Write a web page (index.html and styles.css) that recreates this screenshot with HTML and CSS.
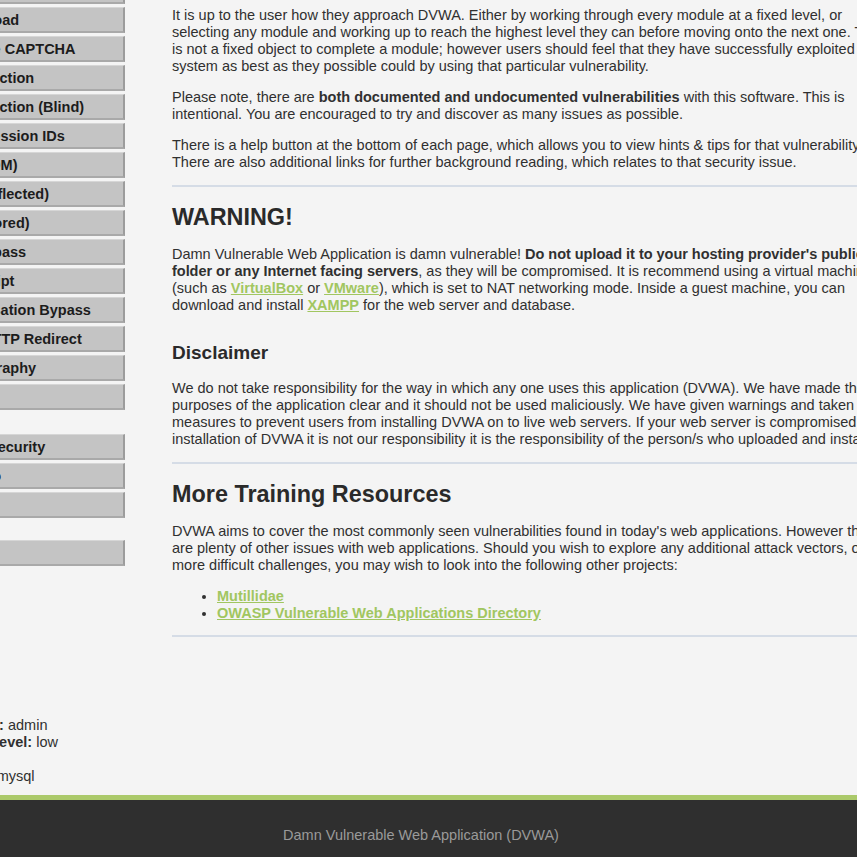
FILE: index.html
```html
<!DOCTYPE html>
<html lang="en">
<head>
<meta charset="utf-8">
<title>Damn Vulnerable Web Application (DVWA)</title>
<link rel="stylesheet" href="styles.css">
</head>
<body>
<div class="page">
  <div class="columns">
    <nav class="menu">
      <ul class="menu-group menu-group-first">
        <li><a href="#">File Inclusion</a></li>
        <li><a href="#">File Upload</a></li>
        <li><a href="#">Insecure CAPTCHA</a></li>
        <li><a href="#">SQL Injection</a></li>
        <li><a href="#">SQL Injection (Blind)</a></li>
        <li><a href="#">Weak Session IDs</a></li>
        <li><a href="#">XSS (DOM)</a></li>
        <li><a href="#">XSS (Reflected)</a></li>
        <li><a href="#">XSS (Stored)</a></li>
        <li><a href="#">CSP Bypass</a></li>
        <li><a href="#">JavaScript</a></li>
        <li><a href="#">Authorisation Bypass</a></li>
        <li><a href="#">Open HTTP Redirect</a></li>
        <li><a href="#">Cryptography</a></li>
        <li><a href="#">API</a></li>
      </ul>
      <ul class="menu-group menu-group-second">
        <li><a href="#">DVWA Security</a></li>
        <li><a href="#">PHP Info</a></li>
        <li><a href="#">About</a></li>
      </ul>
      <ul class="menu-group menu-group-third">
        <li><a href="#">Logout</a></li>
      </ul>
    </nav>
    <main class="main">
      <p>It is up to the user how they approach DVWA. Either by working through every module at a fixed level, or selecting any module and working up to reach the highest level they can before moving onto the next one. There is not a fixed object to complete a module; however users should feel that they have successfully exploited the system as best as they possible could by using that particular vulnerability.</p>
      <p>Please note, there are <b>both documented and undocumented vulnerabilities</b> with this software. This is intentional. You are encouraged to try and discover as many issues as possible.</p>
      <p>There is a help button at the bottom of each page, which allows you to view hints &amp; tips for that vulnerability. There are also additional links for further background reading, which relates to that security issue.</p>
      <hr class="rule">
      <h2 class="title">WARNING!</h2>
      <p>Damn Vulnerable Web Application is damn vulnerable! <b class="warn-strong">Do not upload it to your hosting provider's public_html folder or any Internet facing servers</b>, as they will be compromised. It is recommend using a virtual machine (such as <a class="link" href="#">VirtualBox</a> or <a class="link" href="#">VMware</a>), which is set to NAT networking mode. Inside a guest machine, you can download and install <a class="link" href="#">XAMPP</a> for the web server and database.</p>
      <h3 class="subtitle">Disclaimer</h3>
      <p>We do not take responsibility for the way in which any one uses this application (DVWA). We have made the purposes of the application clear and it should not be used maliciously. We have given warnings and taken measures to prevent users from installing DVWA on to live web servers. If your web server is compromised via an installation of DVWA it is not our responsibility it is the responsibility of the person/s who uploaded and installed it.</p>
      <hr class="rule">
      <h2 class="title">More Training Resources</h2>
      <p>DVWA aims to cover the most commonly seen vulnerabilities found in today's web applications. However there are plenty of other issues with web applications. Should you wish to explore any additional attack vectors, or want more difficult challenges, you may wish to look into the following other projects:</p>
      <ul class="projects">
        <li><a class="link" href="#">Mutillidae</a></li>
        <li><a class="link" href="#">OWASP Vulnerable Web Applications Directory</a></li>
      </ul>
      <hr class="rule">
    </main>
  </div>
  <div class="system-info">
    <div><b>Username:</b> admin</div>
    <div><b>Security Level:</b> low</div>
    <div><b>Locale:</b> en</div>
    <div><b>SQLi DB:</b> mysql</div>
  </div>
  <footer class="footer">
    <p>Damn Vulnerable Web Application (DVWA)</p>
  </footer>
</div>
</body>
</html>
```

FILE: styles.css
```css
html, body {
  margin: 0;
  padding: 0;
  overflow: hidden;
  background: #f4f4f4;
}

body {
  font-family: "Liberation Sans", Arial, sans-serif;
  font-size: 14.5px;
  line-height: 17px;
  color: #303030;
}

.page {
  width: 1002px;
  margin-left: -80px;
}

.columns {
  display: flex;
  align-items: flex-start;
}

.menu {
  width: 205px;
  flex: none;
}

.menu-group {
  list-style: none;
  margin: 0;
  padding: 0;
}

.menu-group-first {
  margin-top: -22px;
}

.menu-group-second {
  margin-top: 24px;
}

.menu-group-third {
  margin-top: 22px;
}

.menu-group li {
  margin-bottom: 3px;
}

.menu-group a {
  display: block;
  box-sizing: border-box;
  height: 26px;
  padding: 4px 0 0 21px;
  background: #c4c4c4;
  border-top: 1px solid #d6d6d6;
  border-right: 2px solid #9c9c9c;
  border-bottom: 2px solid #a9a9a9;
  color: #1c1c1c;
  font-weight: bold;
  text-decoration: none;
  white-space: nowrap;
  overflow: hidden;
}

.main {
  width: 731px;
  margin-left: 47px;
  padding-top: 7px;
  flex: none;
}

.main p {
  margin: 0 0 14px;
}

.warn-strong {
  letter-spacing: -0.03px;
}

.rule {
  height: 0;
  margin: 13px 0 17px;
  border: 0;
  border-top: 2px solid #d5dce6;
}

.title {
  margin: 0 0 15px;
  font-size: 23.4px;
  line-height: 27px;
  font-weight: bold;
  color: #2a2a2a;
}

.subtitle {
  margin: 28px 0 16px;
  font-size: 19px;
  line-height: 22px;
  font-weight: bold;
  color: #2a2a2a;
}

.link {
  color: #a1c660;
  font-weight: bold;
  text-decoration: underline;
}

.projects {
  margin: 14px 0 0;
  padding-left: 45px;
}

.system-info {
  margin-top: 63px;
  padding-left: 9px;
}

.footer {
  margin-top: 10px;
  height: 80px;
  background: #2f2f2f;
  border-top: 5px solid #abc96a;
  color: #9a9a9a;
  text-align: center;
}

.footer p {
  margin: 0;
  padding-top: 27px;
}
```
